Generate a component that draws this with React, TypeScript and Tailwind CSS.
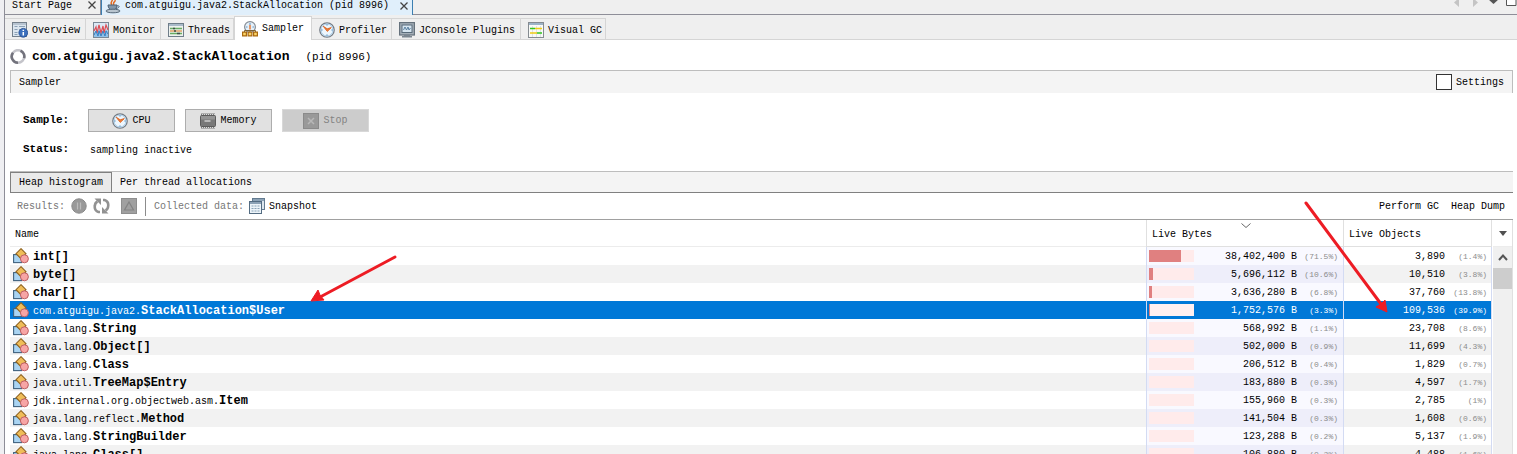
import React from "react";

const ClockIcon = () => (
  <svg width="16" height="16" viewBox="0 0 16 16" className="shrink-0">
    <circle cx="8" cy="8" r="7.2" fill="#e4f0f9" stroke="#747b84" strokeWidth="1.3" />
    <circle cx="8" cy="8" r="6" fill="#edf6fd" stroke="#a9cdea" strokeWidth="1" />
    <path d="M8 2.2v1.4M8 12.4v1.4M2.2 8h1.4M12.4 8h1.400" stroke="#5b8fbb" strokeWidth="1" />
    <path d="M4.200 4.200 8.200 6.800 12.300 5.600 8.300 9.400Z" fill="#ef7f3c" stroke="#dc6420" strokeWidth=".9" />
  </svg>
);

const OverviewIcon = () => (
  <svg width="16" height="16" viewBox="0 0 16 16" className="shrink-0">
    <rect x=".5" y=".5" width="14" height="14" fill="#dce6ef" stroke="#74808c" />
    <path d="M1 1h13v2H1z" fill="#b7c4d1" />
    <path d="M2.500 4.500h3M7 4.500h6M2.500 7.500h3M7 7.500h2M2.500 10.500h3M2.500 12.500h3" stroke="#8ba0b5" />
    <circle cx="11.300" cy="10.800" r="4.400" fill="#3c70bd" stroke="#1f4a91" strokeWidth=".8" />
    <path d="M11.300 10v3.400M11.300 7.700v1.400" stroke="#fff" strokeWidth="1.500" />
  </svg>
);

const MonitorIcon = () => (
  <svg width="16" height="16" viewBox="0 0 16 16" className="shrink-0">
    <rect x=".5" y=".5" width="15" height="15" fill="#dbe9f5" stroke="#7a8896" />
    <path d="M1 15v-4l2-3 1 3 2-5 2 5 1-3 2 4 2-5 2 2v6z" fill="#8fc1ea" />
    <path d="M1 9 3 5l1 6 2-8 2 8 2-7 1 7 2-8 2 5" fill="none" stroke="#dd4e56" strokeWidth="1.200" />
    <path d="M1 13 3 9l2 5 1-5 2 5 2-5 2 5 1-5 2 3" fill="none" stroke="#3b7fc0" strokeWidth="1" />
  </svg>
);

const ThreadsIcon = () => (
  <svg width="16" height="16" viewBox="0 0 16 16" className="shrink-0">
    <rect x=".5" y="1.500" width="15" height="13" fill="#edf1ed" stroke="#6f7d89" />
    <path d="M1 2h14v2H1z" fill="#a9bac8" />
    <path d="M2 6.500h12M2 11.500h12" stroke="#67ab62" strokeWidth="1.300" />
    <path d="M2 9h12" stroke="#dd9450" strokeWidth="1.300" />
    <path d="M5 6.500h2M9 11.500h3M6 9h2" stroke="#3d4e49" strokeWidth="1.300" />
  </svg>
);

const SamplerIcon = () => (
  <svg width="16" height="16" viewBox="0 0 16 16" className="shrink-0">
    <circle cx="8" cy="6" r="5.400" fill="#e5f0f9" stroke="#848b93" strokeWidth="1.200" />
    <path d="M8 2v2M4 6h1.500M10.500 6H12" stroke="#5b93c4" strokeWidth="1" />
    <path d="M8 4v4.500" stroke="#e67833" strokeWidth="1.500" />
    <path d="M2.500 11V9.500h11V11M8 9v2" stroke="#7a6336" fill="none" />
    <path d="M.6 11.100h3.800v3.800H.6zM6.100 11.100h3.800v3.800H6.100zM11.600 11.100h3.800v3.800h-3.800z" fill="#fbd365" stroke="#a9690f" strokeWidth="1.200" />
  </svg>
);

const ConsoleIcon = () => (
  <svg width="16" height="16" viewBox="0 0 16 16" className="shrink-0">
    <rect x=".6" y=".6" width="14.800" height="12.400" fill="#a4afb8" stroke="#65717c" strokeWidth="1.200" />
    <rect x="3" y="3" width="10" height="7.500" fill="#d6e5f0" stroke="#586b7a" />
    <path d="m4.500 8 1.500-3 1.500 3L9 5l1 3 1.500-2" fill="none" stroke="#4f7698" strokeWidth=".9" />
    <path d="M5 13h6v1h2v1.500H3V14h2z" fill="#7b8690" />
  </svg>
);

const VisualGcIcon = () => (
  <svg width="16" height="16" viewBox="0 0 16 16" className="shrink-0">
    <rect x=".5" y=".5" width="15" height="15" fill="#f9faf7" stroke="#858b91" />
    <path d="M1 1h14v2H1z" fill="#9db3c7" />
    <path d="M4.500 4v11M8.500 4v11M12.500 4v11" stroke="#d4d7da" strokeWidth=".7" />
    <path d="M2 6.500h5M9 11h5" stroke="#32c51f" strokeWidth="1.600" />
    <path d="M7 6.500h7M2 11h7" stroke="#f0cc16" strokeWidth="1.600" />
  </svg>
);

const JavaIcon = () => (
  <svg width="16" height="16" viewBox="0 0 16 16" className="shrink-0">
    <path d="M7 7C4 4 9 3 7 0M9 7c-2-3 2-3 1-5" fill="none" stroke="#e36b22" strokeWidth="1.500" />
    <path d="M3 7h9c0 3-2 5-4.500 5S3 10 3 7z" fill="#8297aa" stroke="#4d6275" />
    <path d="M12 8c3-1 3 2-1 2.500" fill="none" stroke="#4d6275" />
    <ellipse cx="8" cy="13" rx="7" ry="1.800" fill="#b9c5cf" stroke="#566878" />
  </svg>
);

const MemoryIcon = () => (
  <svg width="16" height="16" viewBox="0 0 16 16" className="shrink-0">
    <path d="M1 1.500h14M1 14.500h14" stroke="#7d7d7d" strokeWidth="2" />
    <path d="M2 1.500h13M2 14.500h13" stroke="#dcdcdc" strokeWidth="1" strokeDasharray="1 1" />
    <rect x=".5" y="2.500" width="15" height="11" rx="1" fill="#787878" stroke="#5c5c5c" />
    <path d="M1 3h14v3.500H1z" fill="#949494" />
    <path d="M4.500 8h6" stroke="#e6e6e6" strokeWidth="1.200" />
  </svg>
);

const ClassIcon = () => (
  <svg width="16" height="16" viewBox="0 0 16 16" className="shrink-0">
    <rect x=".6" y="6.600" width="8" height="8" fill="#a9d4f2" stroke="#40627e" strokeWidth="1.100" />
    <path d="m8 .7 5 5-5 5-5-5z" fill="#efbd58" stroke="#8f621d" strokeWidth="1.100" />
    <circle cx="11.400" cy="10.800" r="4" fill="#f7a5a5" stroke="#bd5f62" strokeWidth="1" />
  </svg>
);

const SnapshotIcon = () => (
  <svg width="16" height="16" viewBox="0 0 16 16" className="shrink-0">
    <rect x="3.500" y=".5" width="12" height="11" fill="#dce6ee" stroke="#637b90" />
    <path d="M4 1h11v2H4z" fill="#8ca2b6" />
    <rect x=".5" y="3.500" width="12" height="12" fill="#edf4f9" stroke="#536c82" />
    <path d="M1 4h11v2H1z" fill="#8ca2b6" />
    <path d="M2.500 8h8M2.500 10.500h8M2.500 13h8" stroke="#8ba4b8" strokeDasharray="2 1" />
  </svg>
);

const CloseIcon = () => (
  <svg width="8" height="8" viewBox="0 0 8 8">
    <path d="m.5.5 7 7m0-7-7 7" stroke="#444" strokeWidth="1.300" />
  </svg>
);

const tabs = [
  { label: "Overview", icon: <OverviewIcon />, box: "w-[81px]" },
  { label: "Monitor", icon: <MonitorIcon />, box: "w-[75px]" },
  { label: "Threads", icon: <ThreadsIcon />, box: "w-[73px]" },
  { label: "Sampler", icon: <SamplerIcon />, box: "w-[78px]", active: true },
  { label: "Profiler", icon: <ClockIcon />, box: "w-20" },
  { label: "JConsole Plugins", icon: <ConsoleIcon />, box: "w-[129px]" },
  { label: "Visual GC", icon: <VisualGcIcon />, box: "w-[85px]" },
];

type Row = [string, string, string, string, string, string, number];

const rows: Row[] = [
  ["", "int[]", "38,402,400", "71.5%", "3,890", "1.4%", 71.5],
  ["", "byte[]", "5,696,112", "10.6%", "10,510", "3.8%", 9],
  ["", "char[]", "3,636,280", "6.8%", "37,760", "13.8%", 6.8],
  ["com.atguigu.java2.", "StackAllocation$User", "1,752,576", "3.3%", "109,536", "39.9%", 2],
  ["java.lang.", "String", "568,992", "1.1%", "23,708", "8.6%", 0],
  ["java.lang.", "Object[]", "502,000", "0.9%", "11,699", "4.3%", 0],
  ["java.lang.", "Class", "206,512", "0.4%", "1,829", "0.7%", 0],
  ["java.util.", "TreeMap$Entry", "183,880", "0.3%", "4,597", "1.7%", 0],
  ["jdk.internal.org.objectweb.asm.", "Item", "155,960", "0.3%", "2,785", "1%", 0],
  ["java.lang.reflect.", "Method", "141,504", "0.3%", "1,608", "0.6%", 0],
  ["java.lang.", "StringBuilder", "123,288", "0.2%", "5,137", "1.9%", 0],
  ["java.lang.", "Class[]", "106,880", "0.2%", "4,488", "1.6%", 0],
];

const SELECTED = 3;

function HistogramRow({ row, index }: { row: Row; index: number }) {
  const [pkg, name, bytes, bytesPct, objects, objectsPct, bar] = row;
  const selected = index === SELECTED;
  const striped = index % 2 === 1;
  const tone = selected ? "bg-[#0078d7] text-white" : striped ? "bg-[#f2f2f2]" : "bg-white";
  const bytesTone = selected ? "" : striped ? "bg-[#eeeefa]" : "bg-[#f9f9ff]";
  const pctTone = selected ? "text-white" : "text-[#8c8c8c]";
  return (
    <tr className={`h-[18px] ${tone}`}>
      <td className="p-0">
        <div className="flex h-[18px] items-center gap-1 pl-[3px]">
          <ClassIcon />
          <span className="pt-0.5 leading-4 whitespace-nowrap">
            {pkg}
            <b className="text-[12px]">{name}</b>
          </span>
        </div>
      </td>
      <td className={`border-l border-[#d3dbf3] p-0 ${bytesTone}`}>
        <div className="flex h-[18px] items-center pr-[5px] pl-0.5">
          <div className={`h-3 w-[45px] ${selected ? "bg-[#fff0f0]" : "bg-[#ffebeb]"}`}>
            <div className="h-3 bg-[#e08080]" style={{ width: `${bar}%` }} />
          </div>
          <span className="flex-1 pt-0.5 text-right leading-4">{bytes} B</span>
          <span className={`w-[41px] pt-0.5 text-right text-[8px] leading-4 ${pctTone}`}>({bytesPct})</span>
        </div>
      </td>
      <td className="border-x border-[#d3dbf3] p-0">
        <div className="flex h-[18px] items-center justify-end pr-1">
          <span className="pt-0.5 leading-4">{objects}</span>
          <span className={`w-[42px] pt-0.5 text-right text-[8px] leading-4 ${pctTone}`}>({objectsPct})</span>
        </div>
      </td>
    </tr>
  );
}

export default function App() {
  return (
    <div className="relative h-screen overflow-hidden bg-[#efeff2] pl-1 font-['Liberation_Mono',monospace] text-[10px] text-black">
      <div className="flex h-full flex-col border-l border-[#8e8e98] bg-white">
        <header className="flex h-[15px] shrink-0 border-b border-[#8e8e98] bg-[#efefef]">
          <div className="flex w-24 items-center justify-between border-r border-[#8e8e98] pr-1 pb-1 pl-[7px]">
            <button>Start Page</button>
            <button aria-label="Close Start Page"><CloseIcon /></button>
          </div>
          <div className="-mb-px flex w-[312px] items-center gap-1 border-r border-l border-[#3c7fb1] bg-[#e0effb] pr-1 pb-1 pl-[3px]">
            <JavaIcon />
            <button className="whitespace-nowrap">com.atguigu.java2.StackAllocation (pid 8996)</button>
            <button className="ml-auto" aria-label="Close StackAllocation"><CloseIcon /></button>
          </div>
          <svg className="ml-auto" width="66" height="14" viewBox="0 0 66 14">
            <path d="m8-2-5 4.500 5 4.500zM22-2l5 4.500-5 4.500z" fill="#c4c4c4" />
            <path d="m37-1h11l-5.500 5z" fill="#555" />
            <path d="M55.500-3v8.500h9.500V-3" fill="#fff" stroke="#555" />
          </svg>
        </header>

        <nav className="flex h-[25px] shrink-0 items-end border-b border-[#d5d5d5] bg-[#efefef]">
          {tabs.map((t) => (
            <button
              key={t.label}
              className={
                t.active
                  ? `-mb-px flex h-6 shrink-0 items-center gap-1 border-x border-t border-[#d5d5d5] bg-white pl-[7px] whitespace-nowrap ${t.box}`
                  : `flex h-[21px] shrink-0 items-center gap-1 border-t border-r border-[#d5d5d5] pt-0.5 pl-[7px] whitespace-nowrap ${t.box}`
              }
            >
              {t.icon}
              {t.label}
            </button>
          ))}
        </nav>

        <main className="flex min-h-0 flex-1 flex-col pr-1 pl-[5px]">
          <h1 className="flex h-[30px] shrink-0 items-center pt-1">
            <svg width="16" height="16" viewBox="0 0 16 16" className="mr-1.5">
              <circle cx="8" cy="7.500" r="6.300" fill="none" stroke="#c4c4ca" strokeWidth="2.600" />
              <path d="M8 13.800A6.300 6.300 0 0 1 3 3.700M10.500 1.700a6.300 6.300 0 0 1 3.600 7.400" fill="none" stroke="#72727c" strokeWidth="2.600" />
            </svg>
            <b className="mr-4 text-[13px]">com.atguigu.java2.StackAllocation</b>
            <span className="text-[11px]">(pid 8996)</span>
          </h1>

          <section className="flex h-[23px] shrink-0 items-center justify-between border-x border-t border-[#bdbdbd] bg-[#f4f4f4] px-2">
            <span>Sampler</span>
            <label className="flex items-center gap-1">
              <input type="checkbox" className="h-4 w-4 appearance-none border border-[#333] bg-white" />
              Settings
            </label>
          </section>

          <section className="flex h-[78px] shrink-0 flex-col pt-4 pl-[13px]">
            <div className="flex items-center">
              <b className="w-[65px] text-[11px]">Sample:</b>
              <div className="flex gap-2.5">
                <button className="flex h-[23px] w-[87px] items-center justify-center gap-1 border border-[#adadad] bg-[#e1e1e1]"><ClockIcon />CPU</button>
                <button className="flex h-[23px] w-[87px] items-center justify-center gap-1 border border-[#adadad] bg-[#e1e1e1]"><MemoryIcon />Memory</button>
                <button disabled className="flex h-[23px] w-[87px] items-center justify-center gap-1 border border-[#d8d8d8] bg-[#cccccc] text-[#838383]">
                  <svg width="16" height="16" viewBox="0 0 16 16">
                    <rect x=".5" y=".5" width="15" height="15" fill="#999" stroke="#8a8a8a" />
                    <path d="m5 5 6 6m0-6-6 6" stroke="#b8b8b8" strokeWidth="1.500" />
                  </svg>
                  Stop
                </button>
              </div>
            </div>
            <div className="flex items-start pt-2">
              <b className="w-[67px] text-[11px] leading-[18px]">Status:</b>
              <span className="pt-0.5 leading-[18px]">sampling inactive</span>
            </div>
          </section>

          <nav className="flex h-[22px] shrink-0 border-t border-b border-t-[#bdbdbd] border-b-[#808080] bg-[#f4f4f4]">
            <button className="w-[102px] border-x border-t border-[#808080] bg-[#eaeaea] whitespace-nowrap">Heap histogram</button>
            <button className="px-2 whitespace-nowrap">Per thread allocations</button>
          </nav>

          <div className="flex h-[27px] shrink-0 items-center border-b border-[#a0a0a0] pr-2 pl-[7px]">
            <span className="w-[54px] text-[#777]">Results:</span>
            <button aria-label="Pause">
              <svg width="16" height="16" viewBox="0 0 16 16">
                <circle cx="8" cy="8" r="7.200" fill="#999" stroke="#8a8a8a" />
                <path d="M6.500 4.500v7M9.500 4.500v7" stroke="#bcbcbc" strokeWidth="1.200" />
              </svg>
            </button>
            <button aria-label="Refresh" className="ml-1.5">
              <svg width="17" height="16" viewBox="0 0 17 16">
                <path d="M7 14H5.500C2.500 13 1.500 10.500 1.800 8 2 5.500 3 4.200 4.500 3.500M10 2h1.500c3 1 4 3.500 3.700 6-.2 2.500-1.200 3.800-2.700 4.500" fill="none" stroke="#929292" strokeWidth="2.600" />
                <path d="M1.500.5h6.500v6.500zM15.500 15.500H9V9z" fill="#929292" />
              </svg>
            </button>
            <button aria-label="Deltas" className="ml-[11px]">
              <svg width="16" height="16" viewBox="0 0 16 16">
                <rect x=".5" y=".5" width="15" height="15" fill="#a0a0a0" stroke="#8e8e8e" />
                <path d="m8 4 4.500 8h-9z" fill="none" stroke="#838383" strokeWidth="1.200" />
              </svg>
            </button>
            <div className="mx-2 h-[19px] w-px bg-[#8c8c8c]" />
            <span className="mr-[5px] text-[#777]">Collected data:</span>
            <button className="flex items-center gap-1"><SnapshotIcon />Snapshot</button>
            <button className="ml-auto">Perform GC</button>
            <button className="ml-3">Heap Dump</button>
          </div>

          <div className="flex min-h-0 flex-1 overflow-hidden">
            <div className="min-w-0 flex-1">
              <table className="w-full table-fixed border-separate border-spacing-0">
                <colgroup>
                  <col />
                  <col className="w-[197px]" />
                  <col className="w-[149px]" />
                </colgroup>
                <thead>
                  <tr className="h-[27px] text-left">
                    <th className="border-b border-[#ececec] p-0 pt-0.5 pl-[5px] font-normal">Name</th>
                    <th className="relative border-b border-l border-[#e0e0e0] p-0 pt-0.5 pl-[5px] font-normal">
                      Live Bytes
                      <svg className="absolute top-[3px] left-[94px]" width="10" height="6" viewBox="0 0 10 6">
                        <path d="m.5.500 4.500 4 4.500-4" fill="none" stroke="#666" />
                      </svg>
                    </th>
                    <th className="border-x border-b border-[#e0e0e0] p-0 pt-0.5 pl-[5px] font-normal">Live Objects</th>
                  </tr>
                </thead>
                <tbody>
                  {rows.map((r, i) => <HistogramRow key={r[1]} row={r} index={i} />)}
                </tbody>
              </table>
            </div>
            <div className="ml-px flex w-5 flex-col border-r border-[#e0e0e0] bg-[#f0f0f0]">
              <button aria-label="Choose columns" className="flex h-[27px] shrink-0 items-center justify-center border-b border-[#ececec] bg-white">
                <svg width="8" height="5" viewBox="0 0 8 5"><path d="M0 0h8L4 5z" fill="#505050" /></svg>
              </button>
              <button aria-label="Scroll up" className="flex h-[21px] shrink-0 items-center justify-center">
                <svg width="10" height="7" viewBox="0 0 10 7"><path d="m1 6 4-4.500L9 6" fill="none" stroke="#555" strokeWidth="2" /></svg>
              </button>
              <div className="h-[21px] shrink-0 bg-[#cdcdcd]" />
            </div>
          </div>
        </main>
      </div>

      <svg className="pointer-events-none absolute top-[250px] left-[305px]" width="95" height="55" viewBox="0 0 95 55">
        <path d="M90 7 17 46" stroke="#ed1c24" strokeWidth="3" strokeLinecap="round" />
        <path d="m6 51 7-11 2 5 4 5z" fill="#ed1c24" stroke="#ed1c24" />
      </svg>
      <svg className="pointer-events-none absolute top-[198px] left-[1300px]" width="95" height="120" viewBox="0 0 95 120">
        <path d="M6 5 81 106" stroke="#ed1c24" strokeWidth="3" strokeLinecap="round" />
        <path d="m87 114-11-5 5-3 4-4z" fill="#ed1c24" stroke="#ed1c24" />
      </svg>
    </div>
  );
}
